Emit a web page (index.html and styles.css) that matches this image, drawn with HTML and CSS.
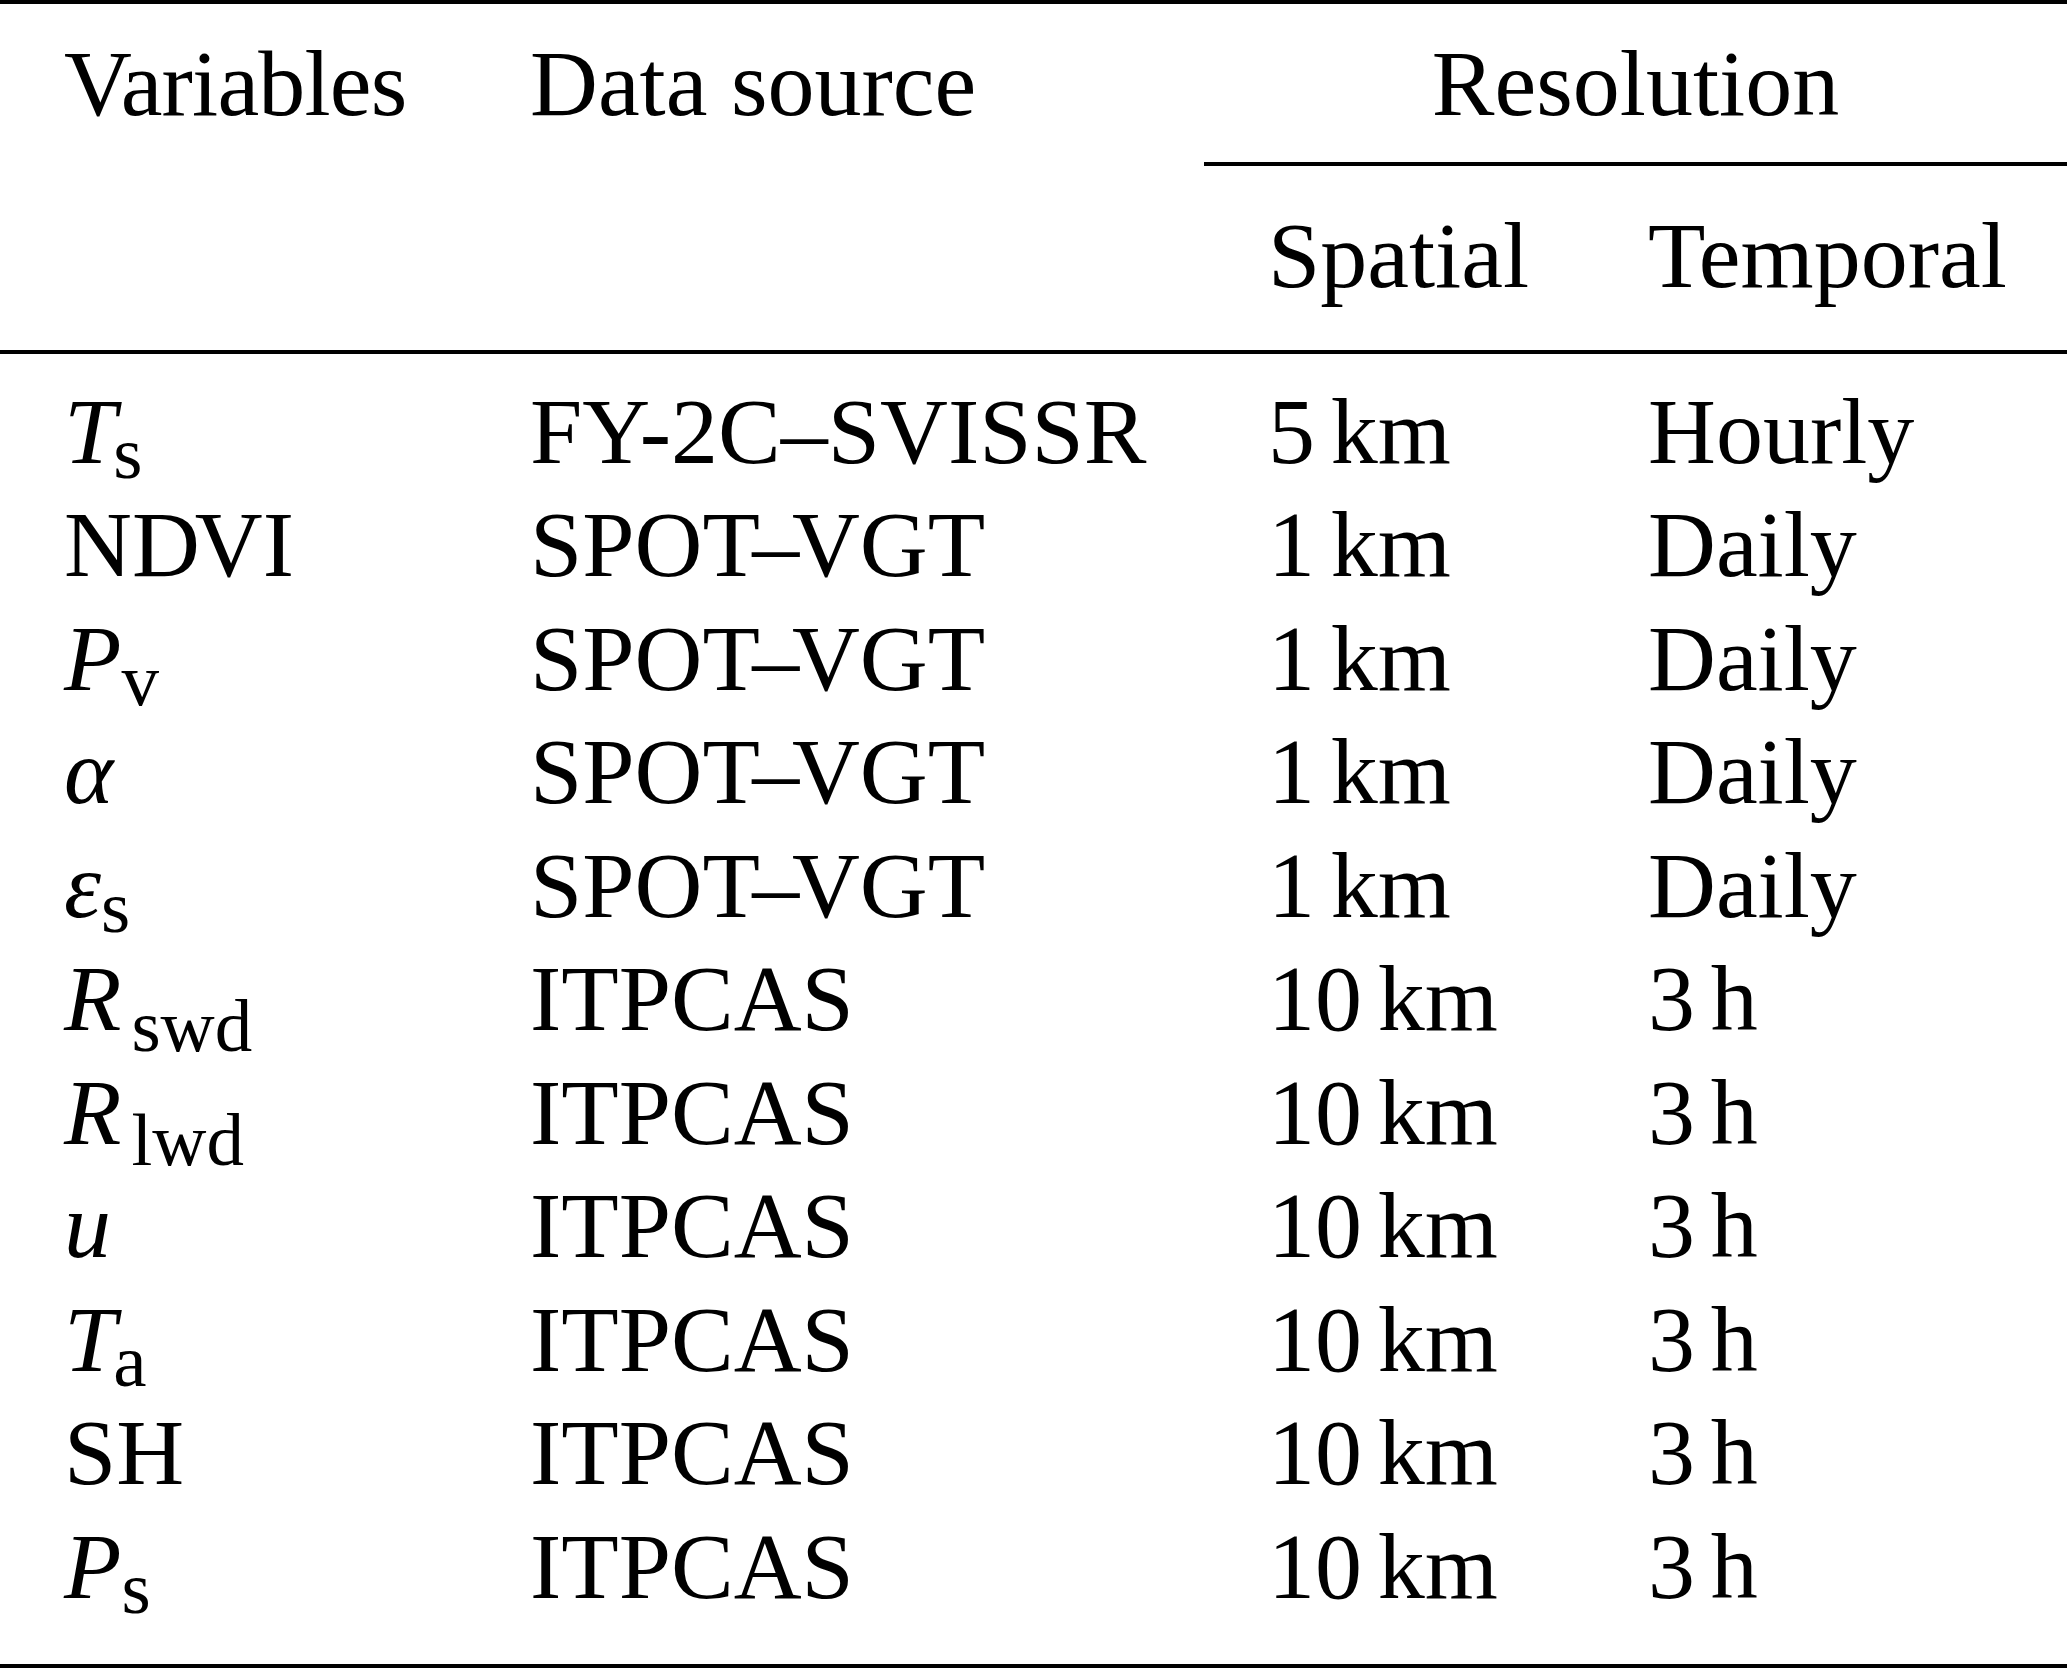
FILE: index.html
```html
<!DOCTYPE html>
<html>
<head>
<meta charset="utf-8">
<link rel="stylesheet" href="styles.css">
</head>
<body>
<div class="tbl">
  <div class="row head1">
    <div class="c"><span class="hv">Variables</span></div>
    <div class="c">Data source</div>
    <div class="res">Resolution</div>
  </div>
  <div class="row head2">
    <div class="c"></div>
    <div class="c"></div>
    <div class="c">Spatial</div>
    <div class="c">Temporal</div>
  </div>
  <div class="body">
    <div class="row"><div class="c"><span class="it tk">T</span><span class="sub">s</span></div><div class="c">FY-2C–SVISSR</div><div class="c">5&#8198;km</div><div class="c">Hourly</div></div>
    <div class="row"><div class="c">N<span class="kern-d">D</span>VI</div><div class="c">SPO<span class="tight">T–</span>VGT</div><div class="c">1&#8198;km</div><div class="c">Daily</div></div>
    <div class="row"><div class="c"><span class="it">P</span><span class="sub">v</span></div><div class="c">SPO<span class="tight">T–</span>VGT</div><div class="c">1&#8198;km</div><div class="c">Daily</div></div>
    <div class="row"><div class="c"><span class="it">α</span></div><div class="c">SPO<span class="tight">T–</span>VGT</div><div class="c">1&#8198;km</div><div class="c">Daily</div></div>
    <div class="row"><div class="c"><span class="it">ε</span><span class="sub">s</span></div><div class="c">SPO<span class="tight">T–</span>VGT</div><div class="c">1&#8198;km</div><div class="c">Daily</div></div>
    <div class="row"><div class="c"><span class="it">R</span><span class="sub sub-r sub-tall">swd</span></div><div class="c">ITPCAS</div><div class="c">10&#8198;km</div><div class="c">3&#8198;h</div></div>
    <div class="row"><div class="c"><span class="it">R</span><span class="sub sub-r sub-tall">lwd</span></div><div class="c">ITPCAS</div><div class="c">10&#8198;km</div><div class="c">3&#8198;h</div></div>
    <div class="row"><div class="c"><span class="it">u</span></div><div class="c">ITPCAS</div><div class="c">10&#8198;km</div><div class="c">3&#8198;h</div></div>
    <div class="row"><div class="c"><span class="it tk">T</span><span class="sub">a</span></div><div class="c">ITPCAS</div><div class="c">10&#8198;km</div><div class="c">3&#8198;h</div></div>
    <div class="row"><div class="c">SH</div><div class="c">ITPCAS</div><div class="c">10&#8198;km</div><div class="c">3&#8198;h</div></div>
    <div class="row"><div class="c"><span class="it">P</span><span class="sub">s</span></div><div class="c">ITPCAS</div><div class="c">10&#8198;km</div><div class="c">3&#8198;h</div></div>
  </div>
</div>
</body>
</html>
```
FILE: styles.css
```css
html, body {
  margin: 0;
  padding: 0;
  background: #ffffff;
}

.tbl {
  width: 2067px;
  font-family: "Liberation Serif", "Times New Roman", serif;
  font-size: 94px;
  line-height: 113.5px;
  color: #000000;
  border-top: 4px solid #000000;
  border-bottom: 4px solid #000000;
}

.row {
  display: grid;
  grid-template-columns: 466px 738px 380px 483px;
}

.c {
  padding-left: 64px;
  white-space: nowrap;
}

.head1 {
  height: 162px;
}

.head1 .c {
  padding-top: 22.5px;
}

.res {
  grid-column: 3 / 5;
  text-align: center;
  padding-top: 22.5px;
  border-bottom: 4px solid #000000;
  box-sizing: border-box;
  white-space: nowrap;
}

.head2 {
  height: 188px;
  box-sizing: border-box;
  border-bottom: 4px solid #000000;
}

.head2 .c {
  padding-top: 32.5px;
}

.body {
  padding-top: 20.5px;
  padding-bottom: 41px;
}

.it {
  font-style: italic;
}

.tk {
  letter-spacing: -3px;
}

.sub {
  font-size: 75px;
  vertical-align: -15px;
  line-height: 0;
}

.sub-r {
  margin-left: 10px;
}

.sub-tall {
  vertical-align: -21px;
}

.hv {
  letter-spacing: -0.8px;
}

.kern-d {
  letter-spacing: -5px;
}

.tight {
  letter-spacing: -7.5px;
}
```
